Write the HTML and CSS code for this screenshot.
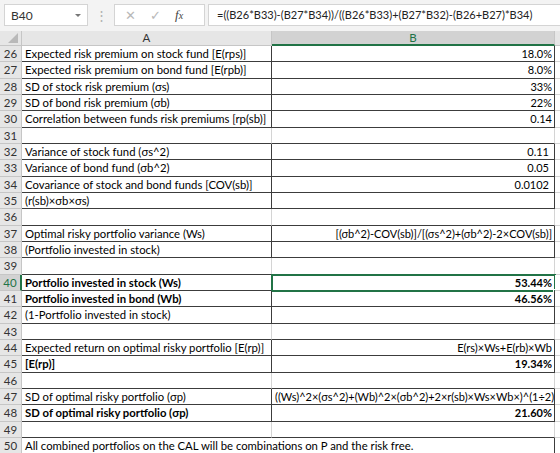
FILE: index.html
```html
<!DOCTYPE html>
<html lang="en">
<head>
  <meta charset="UTF-8" />
  <title>Optimal risky portfolio</title>
  <link rel="stylesheet" href="styles.css">
</head>
<body>
  <!-- Formula bar -->
  <div class="fbar">
    <div class="namebox"><span>B40</span><span class="caret"></span></div>
    <div class="grip">⋮</div>
    <div class="fxbox">
      <span class="cancel">✕</span>
      <span class="enter">✓</span>
      <span class="fx">f<i>x</i></span>
    </div>
    <div class="formula">=((B26*B33)-(B27*B34))/((B26*B33)+(B27*B32)-(B26+B27)*B34)</div>
  </div>

  <!-- Sheet grid -->
  <div class="sheet">
    <div class="corner"><span class="tri"></span></div>
    <div class="colhead">A</div>
    <div class="colhead sel">B</div>
    <div class="colhead rest"></div>

    <div class="rh">26</div><div class="c a b">Expected risk premium on stock fund [E(rps)]</div><div class="c n b">18.0%</div><div class="c rest"></div>
    <div class="rh">27</div><div class="c a b">Expected risk premium on bond fund [E(rpb)]</div><div class="c n b">8.0%</div><div class="c rest"></div>
    <div class="rh">28</div><div class="c a b">SD of stock risk premium (σs)</div><div class="c n b">33%</div><div class="c rest"></div>
    <div class="rh">29</div><div class="c a b">SD of bond risk premium (σb)</div><div class="c n b">22%</div><div class="c rest"></div>
    <div class="rh">30</div><div class="c a b">Correlation between funds risk premiums [rp(sb)]</div><div class="c n b">0.14</div><div class="c rest"></div>
    <div class="rh">31</div><div class="c a e"></div><div class="c n e"></div><div class="c rest"></div>
    <div class="rh">32</div><div class="c a b">Variance of stock fund (σs^2)</div><div class="c n b pad">0.11</div><div class="c rest"></div>
    <div class="rh">33</div><div class="c a b">Variance of bond fund (σb^2)</div><div class="c n b pad">0.05</div><div class="c rest"></div>
    <div class="rh">34</div><div class="c a b">Covariance of stock and bond funds [COV(sb)]</div><div class="c n b pad">0.0102</div><div class="c rest"></div>
    <div class="rh">35</div><div class="c a b">(r(sb)×σb×σs)</div><div class="c n b"></div><div class="c rest"></div>
    <div class="rh">36</div><div class="c a e"></div><div class="c n e"></div><div class="c rest"></div>
    <div class="rh">37</div><div class="c a b">Optimal risky portfolio variance (Ws)</div><div class="c n b">[(σb^2)-COV(sb)]/[(σs^2)+(σb^2)-2×COV(sb)]</div><div class="c rest"></div>
    <div class="rh">38</div><div class="c a b">(Portfolio invested in stock)</div><div class="c n b"></div><div class="c rest"></div>
    <div class="rh">39</div><div class="c a e"></div><div class="c n e"></div><div class="c rest"></div>
    <div class="rh on">40</div><div class="c a b bold">Portfolio invested in stock (Ws)</div><div class="c n b bold active">53.44%<span class="handle"></span></div><div class="c rest"></div>
    <div class="rh">41</div><div class="c a b bold">Portfolio invested in bond (Wb)</div><div class="c n b bold">46.56%</div><div class="c rest"></div>
    <div class="rh">42</div><div class="c a b">(1-Portfolio invested in stock)</div><div class="c n b"></div><div class="c rest"></div>
    <div class="rh">43</div><div class="c a e"></div><div class="c n e"></div><div class="c rest"></div>
    <div class="rh">44</div><div class="c a b">Expected return on optimal risky portfolio [E(rp)]</div><div class="c n b">E(rs)×Ws+E(rb)×Wb</div><div class="c rest"></div>
    <div class="rh">45</div><div class="c a b bold">[E(rp)]</div><div class="c n b bold">19.34%</div><div class="c rest"></div>
    <div class="rh">46</div><div class="c a e"></div><div class="c n e"></div><div class="c rest"></div>
    <div class="rh">47</div><div class="c a b">SD of optimal risky portfolio (σp)</div><div class="c n b">((Ws)^2×(σs^2)+(Wb)^2×(σb^2)+2×r(sb)×Ws×Wb×)^(1÷2)</div><div class="c rest"></div>
    <div class="rh">48</div><div class="c a b bold">SD of optimal risky portfolio (σp)</div><div class="c n b bold">21.60%</div><div class="c rest"></div>
    <div class="rh">49</div><div class="c a e"></div><div class="c n e"></div><div class="c rest"></div>
    <div class="rh">50</div><div class="c a b wide">All combined portfolios on the CAL will be combinations on P and the risk free.</div><div class="c rest"></div>
  </div>
</body>
</html>
```

FILE: styles.css
```css
* {
  box-sizing: border-box;
}

body {
  margin: 0;
  width: 560px;
  height: 453px;
  overflow: hidden;
  background: #fff;
  font-family: Lato, 'Liberation Sans', sans-serif;
  font-size: 11px;
  color: #000;
}

/* formula bar */
.fbar {
  display: flex;
  align-items: center;
  height: 31px;
  padding: 3px 0 4px 4px;
  background: #f3f3f3;
}

.namebox {
  display: flex;
  align-items: center;
  justify-content: space-between;
  width: 84px;
  height: 22px;
  padding: 0 6px 0 6px;
  background: #fff;
  border: 1px solid #d4d4d4;
  color: #333;
  font-size: 12px;
}

.caret {
  width: 0;
  height: 0;
  border-left: 3px solid transparent;
  border-right: 3px solid transparent;
  border-top: 3px solid #777;
}

.grip {
  width: 26px;
  text-align: center;
  color: #b0b0b0;
  font-size: 13px;
}

.fxbox {
  display: flex;
  align-items: center;
  width: 91px;
  height: 22px;
  background: #fff;
  border: 1px solid #d4d4d4;
  padding-left: 10px;
  gap: 14px;
}

.cancel,
.enter {
  color: #b8b8b8;
  font-size: 13px;
}

.fx {
  font-family: 'Liberation Serif', serif;
  font-style: italic;
  font-size: 13px;
  color: #444;
}

.fx i {
  font-size: 10px;
}

.formula {
  flex: 1;
  height: 22px;
  line-height: 20px;
  margin-left: 3px;
  padding-left: 8px;
  background: #fff;
  border: 1px solid #d4d4d4;
  border-right: none;
  white-space: nowrap;
  overflow: hidden;
  font-size: 11px;
  color: #222;
}

/* sheet */
.sheet {
  display: grid;
  grid-template-columns: 22px 250px 283px 5px;
  grid-template-rows: 15px;
  grid-auto-rows: 16.33px;
}

.corner {
  position: relative;
  background: #e6e6e6;
  border-right: 1px solid #c6c6c6;
  border-bottom: 1px solid #c6c6c6;
}

.tri {
  position: absolute;
  right: 3px;
  bottom: 2px;
  width: 0;
  height: 0;
  border-left: 10px solid transparent;
  border-bottom: 10px solid #b9b9b9;
}

.colhead {
  background: #e6e6e6;
  border-right: 1px solid #c6c6c6;
  border-bottom: 1px solid #c6c6c6;
  text-align: center;
  line-height: 14px;
  font-size: 11.5px;
  color: #333;
}

.colhead.sel {
  background: #d2d2d2;
  border-bottom: 2px solid #217346;
  color: #217346;
}

.colhead.rest {
  border-right: none;
}

.rh {
  background: #e6e6e6;
  border-right: 1px solid #c6c6c6;
  border-bottom: 1px solid #c6c6c6;
  text-align: center;
  line-height: 15px;
  font-size: 11.5px;
  color: #333;
}

.rh.on {
  background: #d2d2d2;
  color: #217346;
  border-right: 2px solid #217346;
}

.c {
  position: relative;
  border-right: 1px solid #d4d4d4;
  border-bottom: 1px solid #d4d4d4;
  padding: 0 2px 0 3px;
  line-height: 15px;
  white-space: nowrap;
  overflow: hidden;
}

.c.a {
  font-size: 11.3px;
}

.c.b {
  border-color: #3c3c3c;
}

.c.e {
  border-bottom-color: #3c3c3c;
}

.c.n {
  text-align: right;
}

.c.pad {
  padding-right: 5px;
}

.c.wide {
  grid-column: span 2;
}

.c.rest {
  border-right: none;
  background: #fff;
}

.bold {
  font-weight: bold;
}

.active {
  outline: 2px solid #217346;
  outline-offset: -1px;
  overflow: visible;
}

.handle {
  position: absolute;
  right: -4px;
  bottom: -4px;
  width: 5px;
  height: 5px;
  background: #217346;
  border: 1px solid #fff;
}
```
